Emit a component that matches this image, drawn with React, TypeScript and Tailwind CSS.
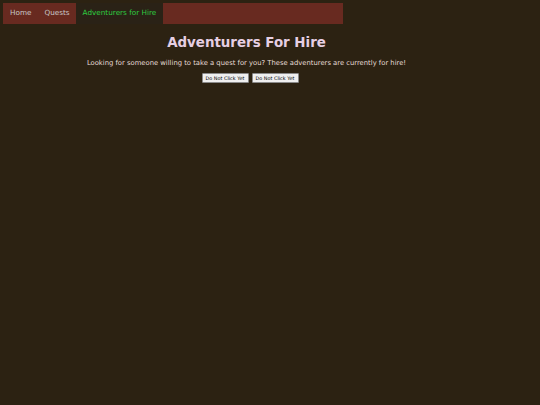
import React from "react";

export default function App() {
  return (
    <div className="min-h-[405px] w-full bg-[#2c2212] pt-[3px] font-['DejaVu_Sans',sans-serif]">
      <nav className="ml-[3px] flex h-[21px] w-[340px] items-stretch bg-[#682a20] text-[7.25px]">
        <a className="flex items-center px-[7px] text-[#c8c8c8]">Home</a>
        <a className="flex items-center px-[6px] text-[#c8c8c8]">Quests</a>
        <a className="flex items-center bg-[#2a2216] px-[7px] text-[#2ecc40]">Adventurers for Hire</a>
      </nav>
      <div className="w-[493px]">
        <h1 className="mt-[10px] text-center text-[13.4px] font-bold leading-[18px] text-[#e6cfe3]">
          Adventurers For Hire
        </h1>
        <p className="mt-[6px] text-center text-[6.8px] leading-[10px] text-[#e6dcd6]">
          Looking for someone willing to take a quest for you? These adventurers are currently for hire!
        </p>
        <div className="mt-[5px] flex justify-center gap-[3px] pl-[7px]">
          <button className="flex h-[10px] w-[47px] items-center justify-center rounded-[1px] border border-[#8a8a8a] bg-[#efefef] text-[4.9px] leading-[7px] text-black">
            Do Not Click Yet
          </button>
          <button className="flex h-[10px] w-[47px] items-center justify-center rounded-[1px] border border-[#8a8a8a] bg-[#efefef] text-[4.9px] leading-[7px] text-black">
            Do Not Click Yet
          </button>
        </div>
      </div>
    </div>
  );
}
